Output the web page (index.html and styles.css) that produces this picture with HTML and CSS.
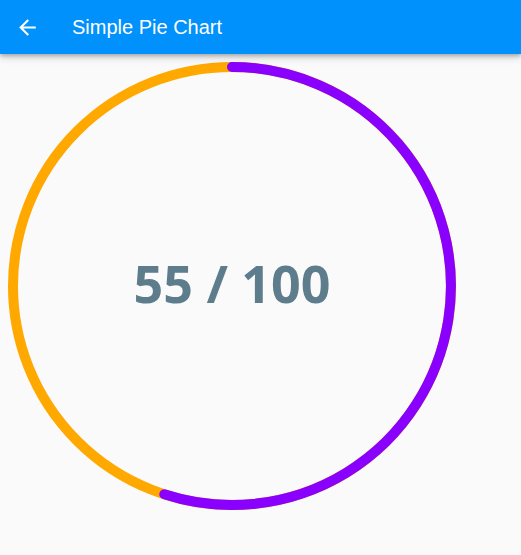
FILE: index.html
```html
<!DOCTYPE html>
<html>
<head>
<meta charset="utf-8">
<link rel="stylesheet" href="styles.css">
</head>
<body>
<header class="appbar">
  <svg class="back" viewBox="0 0 24 24" width="25" height="25"><path fill="#fff" d="M20 11H7.83l5.59-5.59L12 4l-8 8 8 8 1.41-1.41L7.83 13H20v-2z"/></svg>
  <h1 class="title">Simple Pie Chart</h1>
</header>
<main class="content">
  <div class="chart">
    <svg class="ring" viewBox="0 0 464 464" width="464" height="464">
      <circle cx="232" cy="232" r="219" fill="none" stroke="#FFA800" stroke-width="10"/>
      <path d="M232 13 A219 219 0 1 1 164.3 440.3" fill="none" stroke="#8A00FF" stroke-width="10" stroke-linecap="round"/>
    </svg>
    <div class="value">55 / 100</div>
  </div>
</main>
</body>
</html>
```
FILE: styles.css
```css
html, body {
  margin: 0;
  padding: 0;
  background: #FAFAFA;
  width: 521px;
  height: 555px;
  overflow: hidden;
}
.appbar {
  height: 54px;
  background: #0091FC;
  display: flex;
  align-items: center;
  padding-left: 15px;
  box-shadow: 0 2px 4px rgba(0,0,0,0.25), 0 4px 8px rgba(0,0,0,0.12);
  position: relative;
  z-index: 1;
}
.back {
  display: block;
  width: 25px;
  height: 25px;
}
.title {
  margin: 0 0 0 32px;
  font-family: "Liberation Sans", Arial, sans-serif;
  font-weight: normal;
  font-size: 20px;
  color: #fff;
}
.content {
  display: block;
}
.chart {
  display: grid;
  width: 464px;
  height: 464px;
}
.ring, .value {
  grid-area: 1 / 1;
}
.ring {
  display: block;
}
.value {
  align-self: center;
  justify-self: center;
  font-family: "Open Sans", sans-serif;
  font-weight: 700;
  font-size: 52px;
  color: #5E7D8C;
  margin-top: -7px;
}
```
